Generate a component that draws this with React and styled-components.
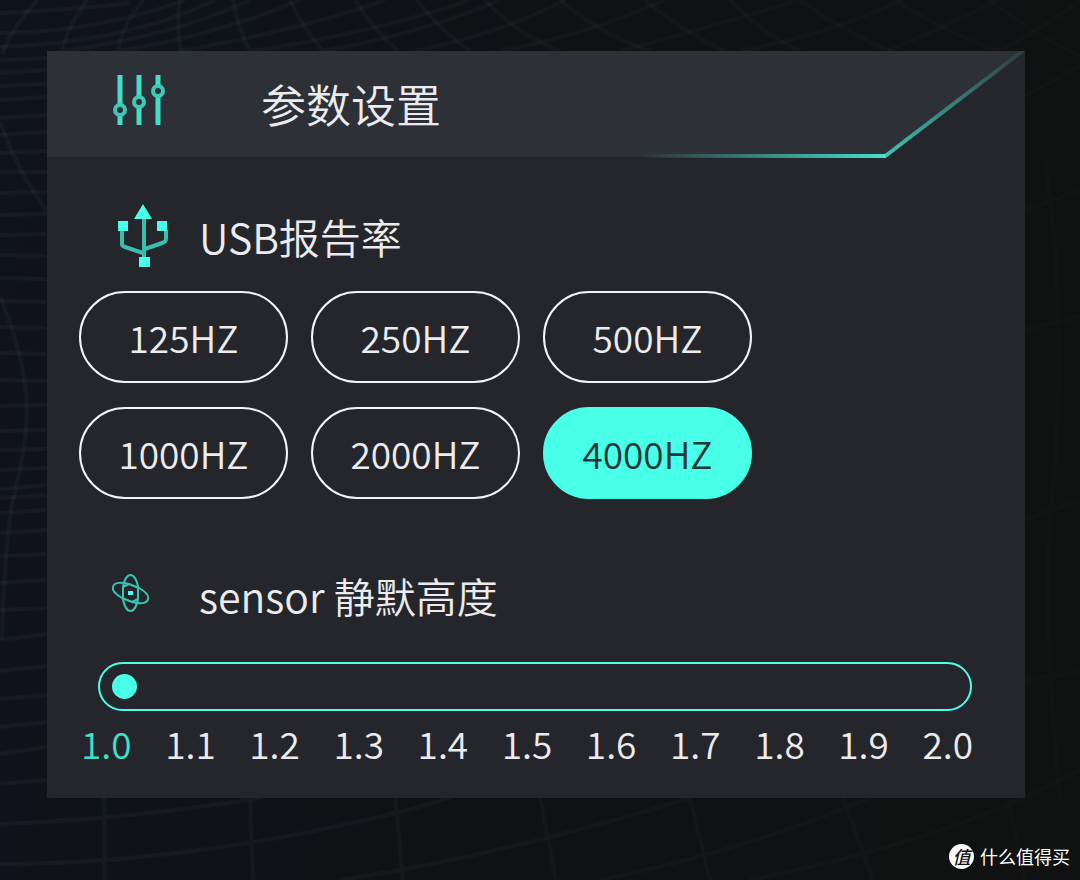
import { useState } from "react";
import styled, { createGlobalStyle } from "styled-components";

const rates = ["125HZ", "250HZ", "500HZ", "1000HZ", "2000HZ", "4000HZ"];
const heights = ["1.0", "1.1", "1.2", "1.3", "1.4", "1.5", "1.6", "1.7", "1.8", "1.9", "2.0"];

function Mesh() {
    return (
        <MeshSvg viewBox="0 0 1080 880" preserveAspectRatio="none" aria-hidden="true">
            <defs>
                <linearGradient id="mesh" gradientUnits="userSpaceOnUse" x1="0" y1="0" x2="1080" y2="0">
                    <stop offset="0" stopColor="#8a93a5" stopOpacity="0.06" />
                    <stop offset="0.4" stopColor="#8a9098" stopOpacity="0.05" />
                    <stop offset="1" stopColor="#8a8f8f" stopOpacity="0.02" />
                </linearGradient>
            </defs>
            <g fill="none" stroke="url(#mesh)" strokeWidth="4">
                <path d="M0 13Q70 10 130 3M0 33Q100 32 185 0M0 47Q130 42 215 0M65 51Q180 34 250 0M120 51Q220 34 300 0M180 51Q300 30 385 0M250 51Q370 34 470 0M323 51Q420 34 500 0M415 51Q500 34 565 0M500 51Q590 34 664 0M620 51Q720 24 799 0M740 51Q830 34 902 0M888 51Q950 24 999 0M1000 51Q1050 24 1080 0" />
                <path d="M38 0Q14 24 2 54M87 0Q68 26 62 51M144 0Q122 24 118 51M180 0Q176 28 181 51M233 0Q238 28 250 51M290 0Q304 30 323 51M355 0Q374 30 398 51M417 0Q440 30 470 51M485 0Q516 34 560 51M560 0Q600 34 650 51M645 0Q680 30 725 51M730 0Q760 32 800 51M800 0Q840 30 890 51M895 0Q940 30 1000 51M990 0Q1030 32 1080 56" />
                <path d="M0 60L47 58M0 73L47 70M0 86L47 84M0 100L47 97M0 118L47 115M0 135L47 132M0 153L47 151M0 172L47 172M0 193L47 192M0 215L47 214M0 235L47 234M0 255L47 256M0 278L47 279M0 301L47 302M0 327L47 328M0 353L47 354M0 380L47 381M0 406L47 405M0 431L47 430M0 450L47 449M0 470L47 468M0 489L47 485M0 498L47 495M0 513L47 510M0 533L47 530M0 556L47 554M0 583L47 580M0 610L47 608M0 640L47 634M0 671L47 666M0 699L47 695M0 727L47 722M0 754L47 747M0 784L47 780" />
                <path d="M0 122Q16 168 47 212M0 297Q26 360 27 410Q26 450 13 500Q4 550 2 640" />
                <path d="M0 824Q120 820 260 798M0 864Q120 864 255 842Q370 822 450 798M340 880Q500 856 690 798M600 880Q740 852 870 798M750 880Q900 850 1010 804L1080 770M104 798L105 880M250 798L253 880M395 798L403 880M540 798L556 880M690 798L710 880M843 798L873 880M1008 798L1025 880" />
                <path d="M1025 96L1080 66M1025 210L1080 190M1025 330L1080 316M1045 160Q1070 330 1050 520Q1044 640 1060 798M1025 520L1080 500M1025 680L1080 672" />
            </g>
        </MeshSvg>
    );
}

function SlidersIcon() {
    return (
        <svg width="52" height="58" viewBox="0 0 52 58" fill="none" stroke="#45dcc9" strokeWidth="5" aria-hidden="true">
            <path d="M7 0V29M7 41V50M26 0V21M26 33V50M45 0V10M45 22V50" />
            <g stroke="#3ec9b7" strokeWidth="4">
                <circle cx="7" cy="35" r="5" />
                <circle cx="26" cy="27" r="5" />
                <circle cx="45" cy="16" r="5" />
            </g>
        </svg>
    );
}

function UsbIcon() {
    return (
        <svg width="62" height="64" viewBox="0 0 62 64" aria-hidden="true">
            <path d="M10 26V40Q10 42 13 43L31 49M54 26V35Q54 38 50 39L33 45M32 14V56" fill="none" stroke="#3bbdac" strokeWidth="4" />
            <path d="M31 0L40 15H22Z" fill="#48ffe7" />
            <path d="M6 17h10v10h-10zM45 17h10v10h-10zM27 53h11v10h-11z" fill="#48ffe7" />
        </svg>
    );
}

function AtomIcon() {
    return (
        <svg width="38" height="42" viewBox="0 0 38 42" fill="none" stroke="#3ac4b2" strokeWidth="2" aria-hidden="true">
            <path d="M18.500 1C22 1 25 6 26 13V25C25 32 22 37 18.500 37C15 37 12 32 11 25V13C12 6 15 1 18.500 1Z" />
            <path d="M1 13C2 8 9 8 17 10L27 14C34 18 37 22 36 25C35 30 28 30 20 28L10 24C3 20 0 16 1 13Z" />
            <path d="M11 13L17 10M26 13L27 14M11 25L10 24M20 28L26 25" />
            <rect x="16" y="17" width="5" height="4" fill="#48ffe7" stroke="none" />
        </svg>
    );
}

function HeaderEdge() {
    return (
        <EdgeSvg width="400" height="108" viewBox="0 0 400 108" aria-hidden="true">
            <defs>
                <linearGradient id="flat" gradientUnits="userSpaceOnUse" x1="15" y1="0" x2="260" y2="0">
                    <stop offset="0" stopColor="#48ffe7" stopOpacity="0" />
                    <stop offset="1" stopColor="#48ffe7" stopOpacity="0.85" />
                </linearGradient>
                <linearGradient id="slope" gradientUnits="userSpaceOnUse" x1="260" y1="105" x2="400" y2="0">
                    <stop offset="0" stopColor="#48ffe7" stopOpacity="0.7" />
                    <stop offset="1" stopColor="#48ffe7" stopOpacity="0.05" />
                </linearGradient>
            </defs>
            <path d="M259 108L400 0V108Z" fill="#25262b" />
            <path d="M10 105H260" stroke="url(#flat)" strokeWidth="4" />
            <path d="M259 106L398 0" stroke="url(#slope)" strokeWidth="4" />
        </EdgeSvg>
    );
}

function App() {
    const [rate, setRate] = useState("4000HZ");
    const [height, setHeight] = useState(0);

    return (
        <Page>
            <GlobalStyle />
            <Mesh />
            <Panel>
                <Header>
                    <SlidersIcon />
                    <Title>参数设置</Title>
                    <HeaderEdge />
                </Header>
                <Content>
                    <SectionHead>
                        <IconCell><UsbIcon /></IconCell>
                        <SectionTitle>USB报告率</SectionTitle>
                    </SectionHead>
                    <Rates>
                        {rates.map(item => (
                            <RateButton key={item} type="button" $active={item === rate} aria-pressed={item === rate} onClick={() => setRate(item)}>
                                {item}
                            </RateButton>
                        ))}
                    </Rates>
                    <SensorHead>
                        <IconCell><AtomIcon /></IconCell>
                        <SectionTitle><label htmlFor="sensor">sensor 静默高度</label></SectionTitle>
                    </SensorHead>
                    <Range id="sensor" type="range" min="0" max="10" value={height} onChange={event => setHeight(Number(event.target.value))} />
                    <Scale>
                        {heights.map((item, index) => <Mark key={item} $active={index === height}>{item}</Mark>)}
                    </Scale>
                </Content>
            </Panel>
            <Watermark>
                <Badge>值</Badge>
                <span>什么值得买</span>
            </Watermark>
        </Page>
    );
}

export default App;

const GlobalStyle = createGlobalStyle`
    * {
        box-sizing: border-box;
    }

    body {
        margin: 0;
        background: #101114;
        color: #ececee;
        font-family: "Noto Sans CJK SC", sans-serif;
    }
`;

const Page = styled.div`
    position: relative;
    min-height: 100vh;
    padding: 51px 55px 10px 47px;
    background: linear-gradient(100deg, #0f131c 0%, #0f1219 20%, #101114 45%, #101111 100%);

    display: flex;
    flex-direction: column;
    justify-content: space-between;
`;

const MeshSvg = styled.svg`
    position: absolute;
    inset: 0;
    width: 100%;
    height: 100%;
`;

const Panel = styled.main`
    position: relative;
    background: #25262b;
`;

const Header = styled.header`
    position: relative;
    height: 106px;
    padding-left: 66px;
    background: #2e3038;

    display: flex;
    align-items: center;
    gap: 96px;
`;

const EdgeSvg = styled.svg`
    position: absolute;
    top: 0;
    right: 0;
`;

const Title = styled.h1`
    margin: 0;
    font-size: 45px;
    line-height: 64px;
    font-weight: 350;
`;

const Content = styled.div`
    padding: 47px 32px 23px;
`;

const SectionHead = styled.div`
    min-height: 64px;
    padding-left: 33px;

    display: flex;
    align-items: center;
`;

const SensorHead = styled(SectionHead)`
    margin-top: 64px;
`;

const IconCell = styled.span`
    width: 87px;
    display: flex;
`;

const SectionTitle = styled.h2`
    margin: 0;
    font-size: 41px;
    line-height: 62px;
    font-weight: 350;
`;

const Rates = styled.div`
    margin-top: 23px;

    display: grid;
    grid-template-columns: repeat(3, 209px);
    gap: 24px 23px;
`;

const RateButton = styled.button`
    height: 92px;
    padding: 0;
    background: ${props => props.$active ? "#48ffe7" : "transparent"};
    border: 2px solid ${props => props.$active ? "#48ffe7" : "#f4f4f5"};
    border-radius: 46px;
    cursor: pointer;

    font-family: inherit;
    font-size: 37px;
    font-weight: 350;
    color: ${props => props.$active ? "#25363b" : "#ececee"};
`;

const Range = styled.input`
    appearance: none;
    display: block;
    width: calc(100% - 40px);
    height: 49px;
    margin: 35px 0 0 19px;
    padding: 0 12px;
    background: transparent;
    border: 2px solid #48ffe7;
    border-radius: 25px;
    cursor: pointer;

    &::-webkit-slider-thumb {
        appearance: none;
        width: 25px;
        height: 25px;
        background: #48ffe7;
        border-radius: 50%;
    }
`;

const Scale = styled.div`
    margin: 0 20px 0 2px;

    display: flex;
    justify-content: space-between;
`;

const Mark = styled.span`
    font-size: 37px;
    line-height: 64px;
    font-weight: 350;
    color: ${props => props.$active ? "#3fe0cb" : "#ececee"};
`;

const Watermark = styled.footer`
    position: relative;
    margin-right: -45px;

    display: flex;
    align-items: center;
    justify-content: flex-end;
    gap: 6px;

    font-size: 18px;
    line-height: 28px;
    color: #ffffff;
`;

const Badge = styled.span`
    width: 25px;
    height: 25px;
    background: #ffffff;
    border-radius: 50%;
    color: #101114;

    display: flex;
    align-items: center;
    justify-content: center;

    font-size: 18px;
    font-style: italic;
    font-weight: 500;
`;
